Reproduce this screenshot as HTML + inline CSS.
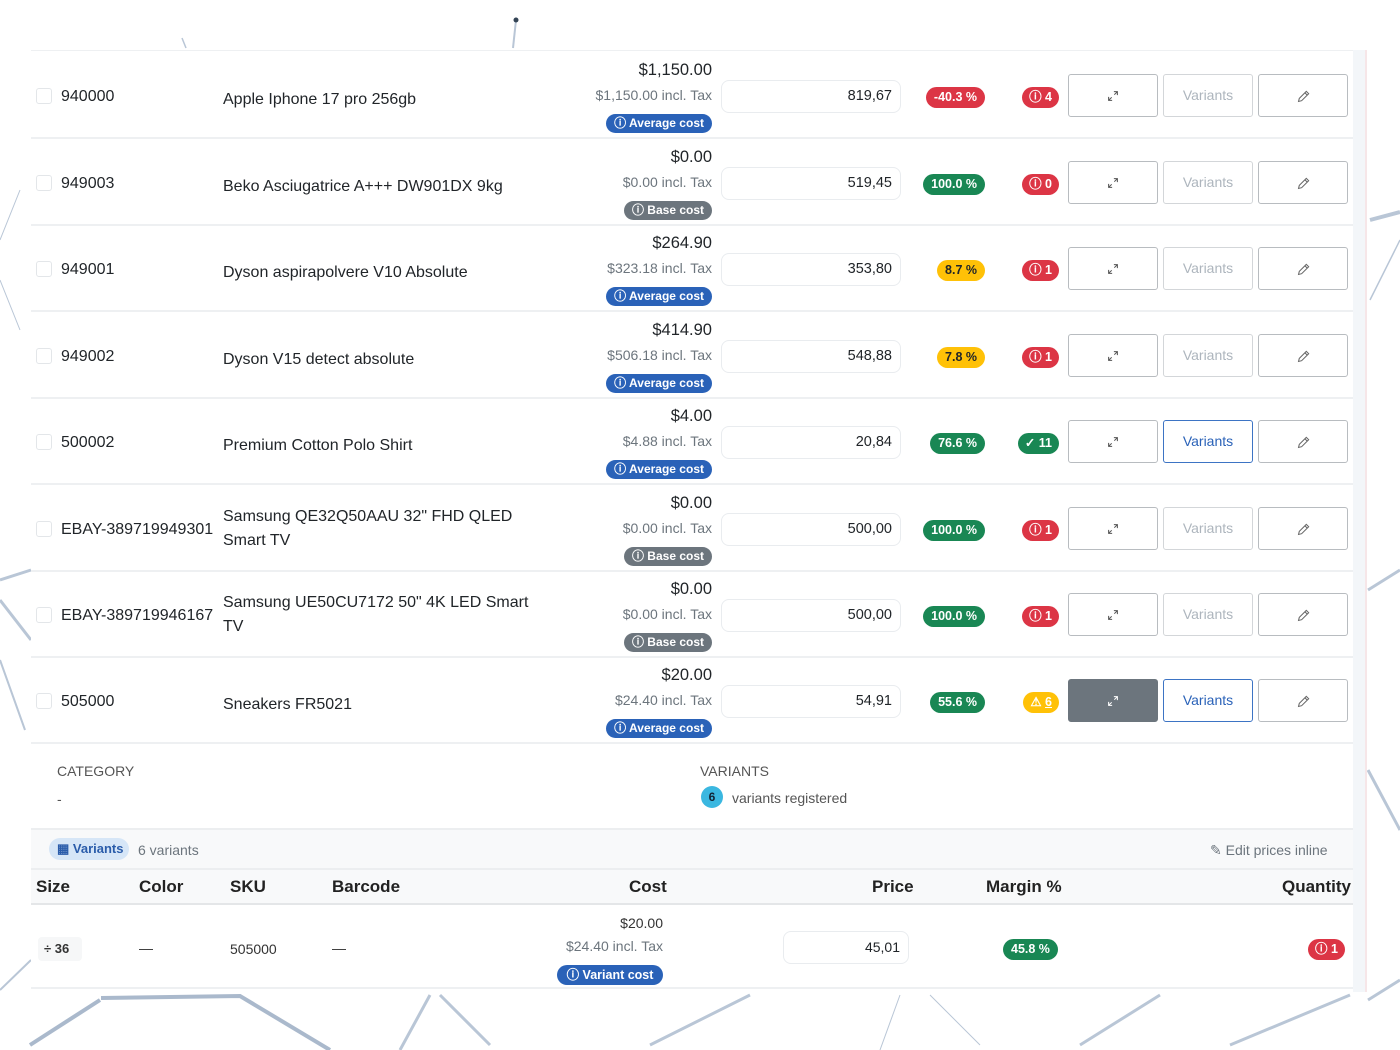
<!DOCTYPE html>
<html><head><meta charset="utf-8"><style>
*{box-sizing:border-box;margin:0;padding:0}
body{width:1400px;height:1050px;position:relative;overflow:hidden;background:#fff;font-family:"Liberation Sans",sans-serif;color:#212529}
.bg{position:absolute;left:0;top:0}
.panel{position:absolute;left:31px;top:50px;width:1322px;height:940px;background:#fff;border-top:1px solid #eef0f2}
.strip{position:absolute;left:1353px;top:50px;width:14px;height:942px;background:#f3f6f9;border-right:2px solid #f6e6e8}
.row{position:absolute;left:0;width:1322px;height:87px;border-bottom:2px solid #eef0f2}
.row>*{position:absolute}
.cb{left:5px;top:36px;width:16px;height:16px;border:1px solid #e3e6e9;border-radius:3px}
.sku{left:30px;top:36px;font-size:16px}
.nm{left:192px;top:36px;font-size:16px;width:310px;line-height:24px}
.nm2{top:20px}
.pr{left:430px;width:251px;text-align:right;top:9px;font-size:16.5px}
.tx{left:430px;width:251px;text-align:right;top:35px;font-size:14px;color:#6c757d}
.cost{right:641px;top:62px;height:19px;border-radius:10px;color:#fff;font-size:12px;font-weight:bold;line-height:19px;padding:0 8px}
.avg{background:#2a62b8}.base{background:#6c757d}
.inp{left:690px;top:28px;width:180px;height:33px;border:1px solid #e9ecef;border-radius:8px;text-align:right;padding-right:8px;font-size:14.5px;line-height:31px}
.mg{right:368px;top:35px;height:21px;border-radius:11px;color:#fff;font-size:12.5px;font-weight:bold;line-height:21px;padding:0 8px}
.g{background:#198754}.r{background:#dc3545}.y{background:#ffc107;color:#212529}
.al{right:294px;top:35px;height:21px;border-radius:11px;color:#fff;font-size:12.5px;font-weight:bold;line-height:21px;padding:0 7px}
.b{top:22px;width:90px;height:43px;border:1px solid #b8bcc0;border-radius:3px;font-size:14px;text-align:center;line-height:41px;color:#adb5bd;background:#fff}
.b svg{vertical-align:middle}
.b1{left:1037px}.b2{left:1132px;border-color:#d3d6d9}.b3{left:1227px}
.b2.on{border-color:#3d74c4;color:#2a62b8}
.b1.dk{background:#6c757d;border-color:#6c757d}
.lbl{position:absolute;font-size:14px;color:#555}
.th{position:absolute;top:877px;font-size:17px;font-weight:bold;color:#222}
</style></head><body>
<svg width="0" height="0" style="position:absolute"><defs>
<symbol id="ex" viewBox="0 0 16 16"><path d="M9 3h4v4M13 3L9.5 6.5M7 13H3V9M3 13l3.5-3.5" fill="none" stroke="currentColor" stroke-width="1.2"/></symbol>
<symbol id="pn" viewBox="0 0 16 16"><path d="M11 2.5l2.5 2.5L6 12.5l-3.3.8.8-3.3z M9.5 4l2.5 2.5" fill="none" stroke="currentColor" stroke-width="1.1"/></symbol>
</defs></svg>
<svg class="bg" width="1400" height="1050" stroke="#b9c6d6" fill="none">
<path d="M516 20 L513 48" stroke-width="2"/><circle cx="516" cy="20" r="2.5" fill="#345" stroke="none"/>
<path d="M182 38 L186 48" stroke-width="1.5"/>
<path d="M1370 220 L1400 212" stroke-width="4"/><path d="M1370 300 L1400 240" stroke-width="1.5"/>
<path d="M0 240 L20 190 M0 280 L20 330" stroke-width="1"/>
<path d="M0 580 L31 570 M0 600 L31 640" stroke-width="3"/>
<path d="M0 660 L25 730 M0 990 L31 960" stroke-width="2"/>
<path d="M1368 590 L1400 570 M1368 770 L1400 830 M1368 1000 L1400 980" stroke-width="3"/>
<path d="M100 1000 L30 1045 M101 998 L240 996 L330 1050" stroke-width="4" stroke="#aab9cc"/>
<path d="M430 995 L400 1050 M440 995 L490 1045 M650 1045 L750 995 M1080 1045 L1160 995 M1230 1045 L1350 995" stroke-width="3"/>
<path d="M930 995 L980 1045 M880 1050 L900 995" stroke-width="1"/>
</svg>
<div class="strip"></div>
<div class="panel">

<div class="row" style="top:1px">
<div class="cb"></div><div class="sku">940000</div><div class="nm">Apple Iphone 17 pro 256gb</div>
<div class="pr">$1,150.00</div><div class="tx">$1,150.00 incl. Tax</div><div class="cost avg">ⓘ Average cost</div>
<div class="inp">819,67</div><div class="mg r">-40.3 %</div><div class="al r">ⓘ 4</div>
<div class="b b1" style="color:#555"><svg width="14" height="14"><use href="#ex"/></svg></div><div class="b b2">Variants</div><div class="b b3" style="color:#666"><svg width="15" height="15"><use href="#pn"/></svg></div></div>

<div class="row" style="top:88px">
<div class="cb"></div><div class="sku">949003</div><div class="nm">Beko Asciugatrice A+++ DW901DX 9kg</div>
<div class="pr">$0.00</div><div class="tx">$0.00 incl. Tax</div><div class="cost base">ⓘ Base cost</div>
<div class="inp">519,45</div><div class="mg g">100.0 %</div><div class="al r">ⓘ 0</div>
<div class="b b1" style="color:#555"><svg width="14" height="14"><use href="#ex"/></svg></div><div class="b b2">Variants</div><div class="b b3" style="color:#666"><svg width="15" height="15"><use href="#pn"/></svg></div></div>

<div class="row" style="top:174px">
<div class="cb"></div><div class="sku">949001</div><div class="nm">Dyson aspirapolvere V10 Absolute</div>
<div class="pr">$264.90</div><div class="tx">$323.18 incl. Tax</div><div class="cost avg">ⓘ Average cost</div>
<div class="inp">353,80</div><div class="mg y">8.7 %</div><div class="al r">ⓘ 1</div>
<div class="b b1" style="color:#555"><svg width="14" height="14"><use href="#ex"/></svg></div><div class="b b2">Variants</div><div class="b b3" style="color:#666"><svg width="15" height="15"><use href="#pn"/></svg></div></div>

<div class="row" style="top:261px">
<div class="cb"></div><div class="sku">949002</div><div class="nm">Dyson V15 detect absolute</div>
<div class="pr">$414.90</div><div class="tx">$506.18 incl. Tax</div><div class="cost avg">ⓘ Average cost</div>
<div class="inp">548,88</div><div class="mg y">7.8 %</div><div class="al r">ⓘ 1</div>
<div class="b b1" style="color:#555"><svg width="14" height="14"><use href="#ex"/></svg></div><div class="b b2">Variants</div><div class="b b3" style="color:#666"><svg width="15" height="15"><use href="#pn"/></svg></div></div>

<div class="row" style="top:347px">
<div class="cb"></div><div class="sku">500002</div><div class="nm">Premium Cotton Polo Shirt</div>
<div class="pr">$4.00</div><div class="tx">$4.88 incl. Tax</div><div class="cost avg">ⓘ Average cost</div>
<div class="inp">20,84</div><div class="mg g">76.6 %</div><div class="al g">✓ 11</div>
<div class="b b1" style="color:#555"><svg width="14" height="14"><use href="#ex"/></svg></div><div class="b b2 on">Variants</div><div class="b b3" style="color:#666"><svg width="15" height="15"><use href="#pn"/></svg></div></div>

<div class="row" style="top:434px">
<div class="cb"></div><div class="sku">EBAY-389719949301</div><div class="nm nm2">Samsung QE32Q50AAU 32" FHD QLED Smart TV</div>
<div class="pr">$0.00</div><div class="tx">$0.00 incl. Tax</div><div class="cost base">ⓘ Base cost</div>
<div class="inp">500,00</div><div class="mg g">100.0 %</div><div class="al r">ⓘ 1</div>
<div class="b b1" style="color:#555"><svg width="14" height="14"><use href="#ex"/></svg></div><div class="b b2">Variants</div><div class="b b3" style="color:#666"><svg width="15" height="15"><use href="#pn"/></svg></div></div>

<div class="row" style="top:520px">
<div class="cb"></div><div class="sku">EBAY-389719946167</div><div class="nm nm2">Samsung UE50CU7172 50" 4K LED Smart TV</div>
<div class="pr">$0.00</div><div class="tx">$0.00 incl. Tax</div><div class="cost base">ⓘ Base cost</div>
<div class="inp">500,00</div><div class="mg g">100.0 %</div><div class="al r">ⓘ 1</div>
<div class="b b1" style="color:#555"><svg width="14" height="14"><use href="#ex"/></svg></div><div class="b b2">Variants</div><div class="b b3" style="color:#666"><svg width="15" height="15"><use href="#pn"/></svg></div></div>

<div class="row" style="top:606px">
<div class="cb"></div><div class="sku">505000</div><div class="nm">Sneakers FR5021</div>
<div class="pr">$20.00</div><div class="tx">$24.40 incl. Tax</div><div class="cost avg">ⓘ Average cost</div>
<div class="inp">54,91</div><div class="mg g">55.6 %</div><div class="al y">⚠ <u>6</u></div>
<div class="b b1 dk" style="color:#fff"><svg width="14" height="14"><use href="#ex"/></svg></div><div class="b b2 on">Variants</div><div class="b b3" style="color:#666"><svg width="15" height="15"><use href="#pn"/></svg></div></div>
</div>

<div class="lbl" style="left:57px;top:763px">CATEGORY</div>
<div class="lbl" style="left:57px;top:791px">-</div>
<div class="lbl" style="left:700px;top:763px">VARIANTS</div>
<div style="position:absolute;left:701px;top:786px;width:22px;height:22px;border-radius:11px;background:#3ab7e0;color:#123;font-size:12px;font-weight:bold;text-align:center;line-height:22px">6</div>
<div class="lbl" style="left:732px;top:790px">variants registered</div>

<div style="position:absolute;left:31px;top:828px;width:1322px;height:42px;background:#f8f9fa;border-top:2px solid #eceef0;border-bottom:2px solid #eceef0"></div>
<div style="position:absolute;left:49px;top:838px;width:80px;height:22px;border-radius:11px;background:#d6e6f7;color:#2a5caa;font-size:13px;font-weight:bold;line-height:22px;padding-left:8px">▦ Variants</div>
<div class="lbl" style="left:138px;top:842px;color:#6c757d">6 variants</div>
<div class="lbl" style="left:1210px;top:842px;color:#6c757d">✎ Edit prices inline</div>

<div style="position:absolute;left:31px;top:870px;width:1322px;height:35px;background:#f8f9fa;border-bottom:2px solid #e4e6e8"></div>
<div class="th" style="left:36px">Size</div>
<div class="th" style="left:139px">Color</div>
<div class="th" style="left:230px">SKU</div>
<div class="th" style="left:332px">Barcode</div>
<div class="th" style="left:629px">Cost</div>
<div class="th" style="left:872px">Price</div>
<div class="th" style="left:986px">Margin %</div>
<div class="th" style="left:1282px">Quantity</div>

<div style="position:absolute;left:31px;top:905px;width:1322px;height:84px;border-bottom:2px solid #eef0f2"></div>
<div style="position:absolute;left:38px;top:937px;width:44px;height:24px;background:#f6f7f8;border-radius:4px;font-size:13px;font-weight:bold;line-height:24px;padding-left:6px;color:#333">÷ 36</div>
<div class="lbl" style="left:139px;top:940px;color:#333">—</div>
<div class="lbl" style="left:230px;top:941px;color:#333">505000</div>
<div class="lbl" style="left:332px;top:940px;color:#333">—</div>
<div class="lbl" style="left:560px;width:103px;text-align:right;top:915px;color:#333">$20.00</div>
<div class="lbl" style="left:540px;width:123px;text-align:right;top:938px;color:#6c757d">$24.40 incl. Tax</div>
<div style="position:absolute;left:557px;top:965px;width:106px;height:20px;border-radius:10px;background:#2a62b8;color:#fff;font-size:12.5px;font-weight:bold;line-height:20px;text-align:center">ⓘ Variant cost</div>
<div style="position:absolute;left:783px;top:931px;width:126px;height:33px;border:1px solid #e9ecef;border-radius:8px;text-align:right;padding-right:8px;font-size:14px;line-height:31px">45,01</div>
<div style="position:absolute;left:1003px;top:939px;height:21px;border-radius:11px;background:#198754;color:#fff;font-size:12.5px;font-weight:bold;line-height:21px;padding:0 8px">45.8 %</div>
<div style="position:absolute;left:1308px;top:939px;height:21px;border-radius:11px;background:#dc3545;color:#fff;font-size:12.5px;font-weight:bold;line-height:21px;padding:0 7px">ⓘ 1</div>
</body></html>
